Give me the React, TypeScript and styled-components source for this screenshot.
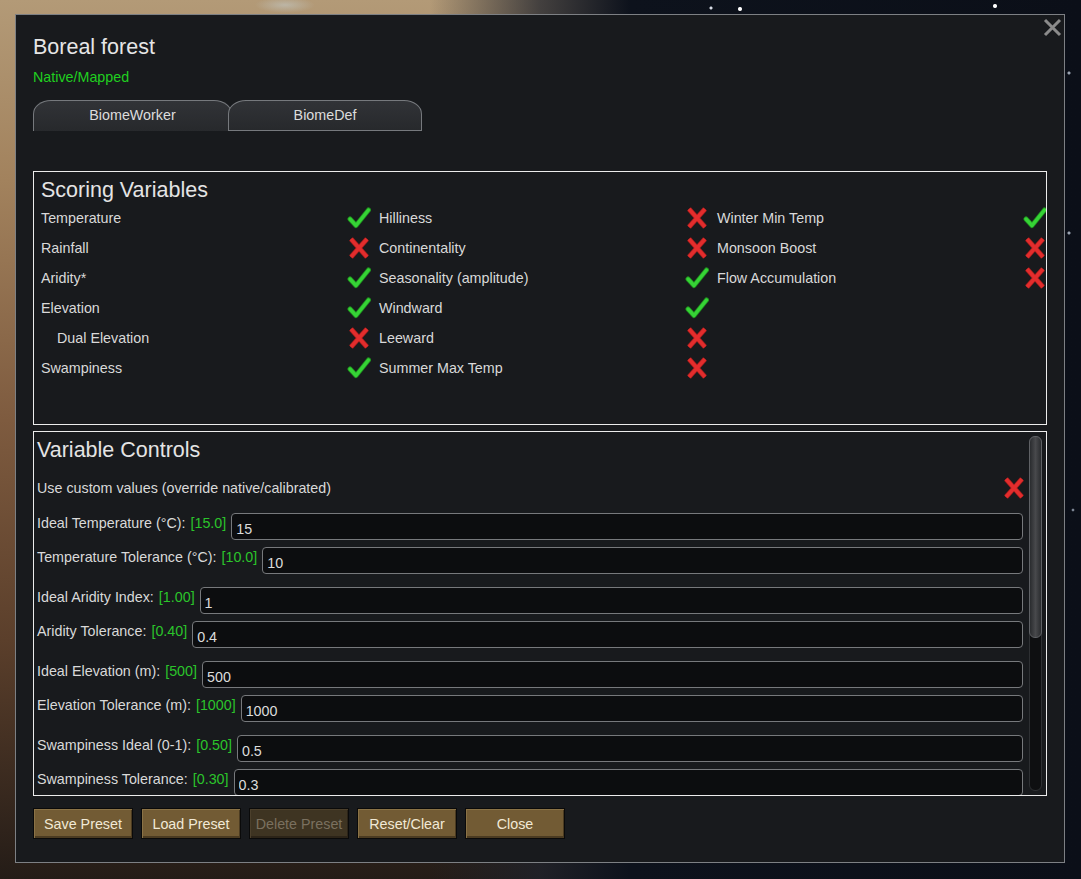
import styled, { createGlobalStyle } from 'styled-components';

const GlobalStyle = createGlobalStyle`
  html, body {
    margin: 0;
    padding: 0;
  }

  body {
    font-family: "Liberation Sans", Arial, sans-serif;
    background:
      radial-gradient(circle at 740px 9px, #ffffff 0, #ffffff 1.5px, transparent 2.5px),
      radial-gradient(circle at 995px 6px, #ffffff 0, #ffffff 1.5px, transparent 2.5px),
      radial-gradient(circle at 711px 8px, #d8dde6 0, #d8dde6 1px, transparent 2px),
      radial-gradient(circle at 1069px 73px, #9aa3b0 0, #9aa3b0 1px, transparent 2px),
      radial-gradient(circle at 1069px 233px, #9aa3b0 0, #9aa3b0 1px, transparent 2px),
      radial-gradient(circle at 1073px 510px, #7c8593 0, #7c8593 0.8px, transparent 1.8px),
      radial-gradient(ellipse 30px 8px at 285px 5px, rgba(200, 215, 222, 0.45), transparent),
      linear-gradient(
        to right,
        transparent 0,
        transparent 430px,
        rgba(30, 34, 44, 0.75) 540px,
        #0d121c 630px,
        #0b0f18 1081px
      ),
      linear-gradient(
        to bottom,
        #b39a77 0,
        #a2825d 180px,
        #7e5b3f 420px,
        #5b3f2b 640px,
        #241c17 879px
      );
  }
`;

const Page = styled.div`
  box-sizing: border-box;
  min-height: 879px;
  padding: 14px 0 0 15px;
`;

const Window = styled.section`
  position: relative;
  box-sizing: border-box;
  width: 1050px;
  height: 849px;
  padding: 20px 17px 0;
  display: flex;
  flex-direction: column;
  background: #181a1d;
  border: 1px solid #7d8084;
  color: #d9d9d9;
  font-size: 14.3px;
`;

const CloseIcon = styled.svg`
  position: absolute;
  top: 3px;
  right: 2px;
  width: 19px;
  height: 19px;
`;

const Title = styled.h1`
  margin: 0;
  font-size: 21.5px;
  font-weight: normal;
  line-height: 24px;
  color: #e6e6e6;
`;

const Subtitle = styled.div`
  margin-top: 10px;
  line-height: 16px;
  color: #20cf20;
`;

const TabBar = styled.div`
  display: flex;
  margin-top: 15px;
`;

const Tab = styled.div<{ $active?: boolean; $width: number }>`
  box-sizing: border-box;
  width: ${(p) => p.$width}px;
  height: 31px;
  padding-bottom: 2px;
  margin-left: ${(p) => (p.$active ? 0 : -4)}px;
  display: flex;
  align-items: center;
  justify-content: center;
  line-height: 16px;
  color: #dcdcdc;
  background: linear-gradient(#313337, #27292c);
  border: 1px solid #76797d;
  border-bottom: ${(p) => (p.$active ? 'none' : '1px solid #76797d')};
  border-radius: 18px 18px 0 0 / 14px 14px 0 0;
`;

const Panel = styled.div<{ $height: number; $mt: number }>`
  box-sizing: border-box;
  height: ${(p) => p.$height}px;
  margin-top: ${(p) => p.$mt}px;
  border: 1px solid #ececec;
  overflow: hidden;
`;

const ScoringPanel = styled(Panel)`
  padding: 6px 7px 0;
`;

const ControlsPanel = styled(Panel)`
  display: flex;
  padding: 0 4px 0 3px;
`;

const PanelTitle = styled.h2`
  margin: 0;
  font-size: 21.5px;
  font-weight: normal;
  line-height: 24px;
  color: #e4e4e4;
  white-space: nowrap;
`;

const ScoreGrid = styled.div`
  display: grid;
  grid-template-columns: repeat(3, 338px);
  grid-auto-rows: 30px;
  margin-top: 1px;
`;

const ScoreCell = styled.div<{ $indent?: boolean }>`
  display: flex;
  align-items: center;
  justify-content: space-between;
  padding: 0 8px 0 ${(p) => (p.$indent ? 16 : 0)}px;
  line-height: 16px;
  white-space: nowrap;
`;

const ScrollArea = styled.div`
  flex: 1;
  padding-top: 6px;
`;

const Scrollbar = styled.div`
  box-sizing: border-box;
  width: 13px;
  margin: 4px 0 4px 6px;
  background: #0e0f11;
  border: 1px solid #2e3033;
  border-radius: 6px;
`;

const ScrollThumb = styled.div`
  box-sizing: border-box;
  height: 202px;
  margin: -1px;
  border: 1px solid #5f6165;
  border-radius: 6px;
  background: linear-gradient(to right, #2a2c2f, #48494c 50%, #2a2c2f);
`;

const OptionRow = styled.div`
  display: flex;
  align-items: center;
  justify-content: space-between;
  height: 24px;
  margin: 14px -3px 13px 0;
  line-height: 16px;
`;

const FieldGroup = styled.div`
  display: flex;
  flex-direction: column;
  gap: 7px;
  margin-bottom: 13px;
`;

const FieldRow = styled.div`
  display: flex;
  align-items: flex-start;
  height: 27px;
`;

const FieldLabel = styled.label`
  padding-top: 2px;
  line-height: 16px;
  white-space: nowrap;
`;

const Default = styled.span`
  margin-left: 5px;
  color: #2bc42b;
`;

const FieldInput = styled.input`
  box-sizing: border-box;
  flex: 1;
  min-width: 0;
  height: 27px;
  margin-left: 5px;
  padding: 4px 4px 0;
  font-family: "Liberation Sans", Arial, sans-serif;
  font-size: 14.3px;
  color: #dcdcdc;
  background: #0c0d0f;
  border: 1px solid #77797c;
  border-radius: 4px;
  outline: none;
`;

const ButtonBar = styled.div`
  display: flex;
  gap: 8px;
  margin-top: 12px;
`;

const GameButton = styled.button`
  box-sizing: border-box;
  width: 100px;
  height: 31px;
  padding: 0;
  font-family: "Liberation Sans", Arial, sans-serif;
  font-size: 14.3px;
  color: #f1e9d6;
  background: #725b34;
  border: 1px solid #0a0a0a;
  box-shadow: inset 1px 1px 0 #8a7246, inset -1px -2px 0 #4b3b21;

  &:disabled {
    color: #7a705f;
    background: #3e3422;
    box-shadow: inset 1px 1px 0 #4c402c, inset -1px -2px 0 #2c2418;
  }
`;

const Check = () => (
  <svg width="24" height="22" viewBox="0 0 24 22">
    <path
      d="M3 12 L9 18.5 L21.5 3"
      fill="none"
      stroke="#1f8f1f"
      strokeWidth="5"
      strokeLinecap="round"
      strokeLinejoin="round"
    />
    <path
      d="M3 12 L9 18.5 L21.5 3"
      fill="none"
      stroke="#36d336"
      strokeWidth="3.4"
      strokeLinecap="round"
      strokeLinejoin="round"
    />
  </svg>
);

const Cross = () => (
  <svg width="24" height="22" viewBox="0 0 24 22">
    <path
      d="M4 2 L20 20 M20 2 L4 20"
      fill="none"
      stroke="#a61c1c"
      strokeWidth="5"
    />
    <path
      d="M4 2 L20 20 M20 2 L4 20"
      fill="none"
      stroke="#e22d2d"
      strokeWidth="3.6"
    />
  </svg>
);

type Score = { label: string; on: boolean; indent?: boolean };

const scores: Score[] = [
  { label: 'Temperature', on: true },
  { label: 'Hilliness', on: false },
  { label: 'Winter Min Temp', on: true },
  { label: 'Rainfall', on: false },
  { label: 'Continentality', on: false },
  { label: 'Monsoon Boost', on: false },
  { label: 'Aridity*', on: true },
  { label: 'Seasonality (amplitude)', on: true },
  { label: 'Flow Accumulation', on: false },
  { label: 'Elevation', on: true },
  { label: 'Windward', on: true },
  { label: '', on: false },
  { label: 'Dual Elevation', on: false, indent: true },
  { label: 'Leeward', on: false },
  { label: '', on: false },
  { label: 'Swampiness', on: true },
  { label: 'Summer Max Temp', on: false },
];

type Field = { label: string; def: string; value: string };

const fieldGroups: Field[][] = [
  [
    { label: 'Ideal Temperature (°C):', def: '[15.0]', value: '15' },
    { label: 'Temperature Tolerance (°C):', def: '[10.0]', value: '10' },
  ],
  [
    { label: 'Ideal Aridity Index:', def: '[1.00]', value: '1' },
    { label: 'Aridity Tolerance:', def: '[0.40]', value: '0.4' },
  ],
  [
    { label: 'Ideal Elevation (m):', def: '[500]', value: '500' },
    { label: 'Elevation Tolerance (m):', def: '[1000]', value: '1000' },
  ],
  [
    { label: 'Swampiness Ideal (0-1):', def: '[0.50]', value: '0.5' },
    { label: 'Swampiness Tolerance:', def: '[0.30]', value: '0.3' },
  ],
];

const buttons = ['Save Preset', 'Load Preset', 'Delete Preset', 'Reset/Clear', 'Close'];

const App = () => {
  return (
    <>
      <GlobalStyle />
      <Page>
        <Window>
          <CloseIcon viewBox="0 0 19 19">
            <path d="M2 2 L17 17 M17 2 L2 17" stroke="#8b8b8b" strokeWidth="3" />
          </CloseIcon>

          <Title>Boreal forest</Title>
          <Subtitle>Native/Mapped</Subtitle>

          <TabBar>
            <Tab $active $width={199}>BiomeWorker</Tab>
            <Tab $width={194}>BiomeDef</Tab>
          </TabBar>

          <ScoringPanel $height={254} $mt={40}>
            <PanelTitle>Scoring Variables</PanelTitle>
            <ScoreGrid>
              {scores.map((s, i) => (
                <ScoreCell key={i} $indent={s.indent}>
                  <span>{s.label}</span>
                  {s.label && (s.on ? <Check /> : <Cross />)}
                </ScoreCell>
              ))}
            </ScoreGrid>
          </ScoringPanel>

          <ControlsPanel $height={365} $mt={6}>
            <ScrollArea>
              <PanelTitle>Variable Controls</PanelTitle>
              <OptionRow>
                <span>Use custom values (override native/calibrated)</span>
                <Cross />
              </OptionRow>
              {fieldGroups.map((group, gi) => (
                <FieldGroup key={gi}>
                  {group.map((f) => (
                    <FieldRow key={f.label}>
                      <FieldLabel>
                        {f.label}
                        <Default>{f.def}</Default>
                      </FieldLabel>
                      <FieldInput value={f.value} readOnly />
                    </FieldRow>
                  ))}
                </FieldGroup>
              ))}
            </ScrollArea>
            <Scrollbar>
              <ScrollThumb />
            </Scrollbar>
          </ControlsPanel>

          <ButtonBar>
            {buttons.map((b) => (
              <GameButton key={b} disabled={b === 'Delete Preset'}>
                {b}
              </GameButton>
            ))}
          </ButtonBar>
        </Window>
      </Page>
    </>
  );
};

export default App;
